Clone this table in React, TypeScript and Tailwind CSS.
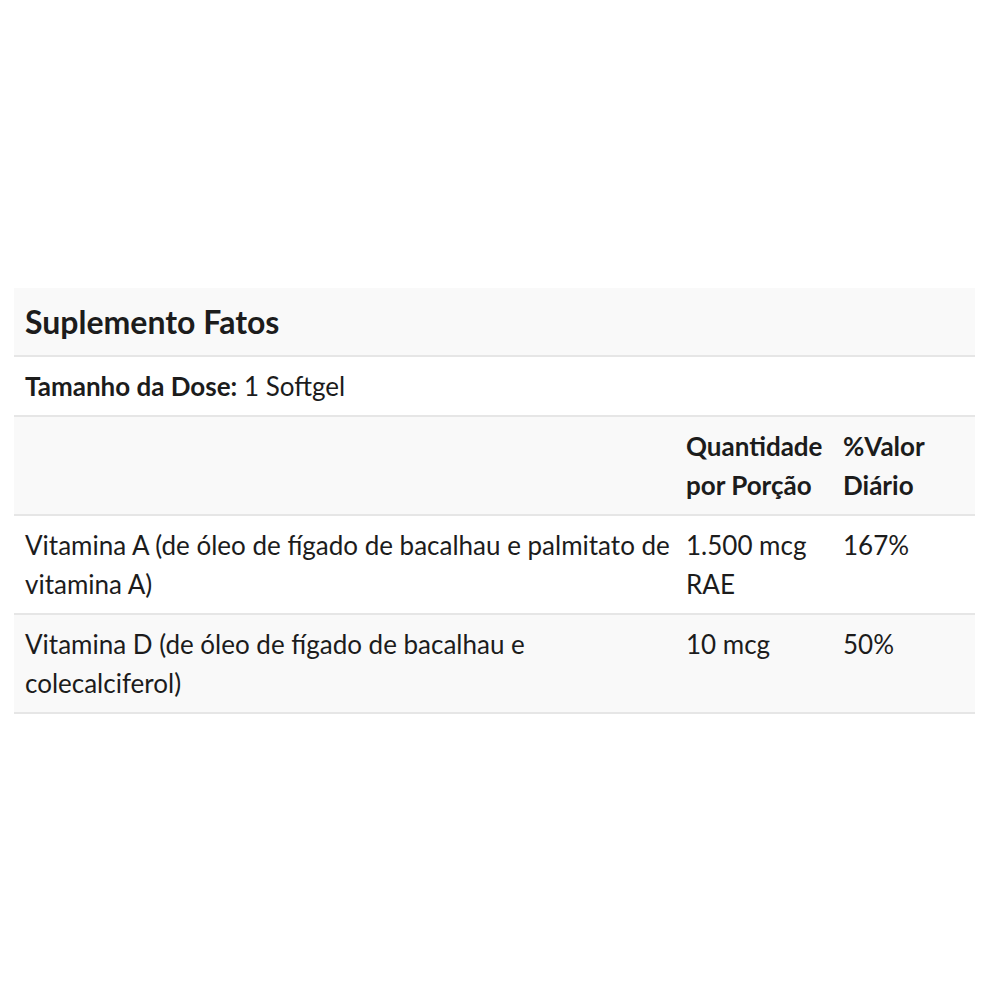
export default function App() {
  const font = { fontFamily: "Lato, 'Open Sans', sans-serif" };
  return (
    <div className="w-[1000px] h-[1000px] bg-white pt-[288px] pl-[14px]" style={font}>
      <div className="w-[961px] text-[#1c1c1c] text-[26px] leading-[39px]">
        <div className="bg-[#f9f9f9] h-[69px] flex items-center px-[11px] border-b-2 border-[#e6e6e6]">
          <span className="text-[32px] font-bold">Suplemento Fatos</span>
        </div>
        <div className="bg-white h-[60px] flex items-center px-[11px] border-b-2 border-[#e6e6e6]">
          <span><b>Tamanho da Dose:</b> 1 Softgel</span>
        </div>
        <div className="grid grid-cols-[661px_157px_143px] bg-[#f9f9f9] border-b-2 border-[#e6e6e6]">
          <div className="pt-[10px] pb-[9px] pl-[11px] pr-[4px]"></div>
          <div className="pt-[10px] pb-[9px] px-[11px] font-bold">Quantidade por Porção</div>
          <div className="pt-[10px] pb-[9px] px-[11px] font-bold">%Valor Diário</div>
        </div>
        <div className="grid grid-cols-[661px_157px_143px] bg-white border-b-2 border-[#e6e6e6]">
          <div className="pt-[10px] pb-[9px] pl-[11px] pr-[4px]">Vitamina A (de óleo de fígado de bacalhau e palmitato de vitamina A)</div>
          <div className="pt-[10px] pb-[9px] px-[11px]">1.500 mcg RAE</div>
          <div className="pt-[10px] pb-[9px] px-[11px]">167%</div>
        </div>
        <div className="grid grid-cols-[661px_157px_143px] bg-[#f9f9f9] border-b-2 border-[#e6e6e6]">
          <div className="pt-[10px] pb-[9px] pl-[11px] pr-[4px]">Vitamina D (de óleo de fígado de bacalhau e colecalciferol)</div>
          <div className="pt-[10px] pb-[9px] px-[11px]">10 mcg</div>
          <div className="pt-[10px] pb-[9px] px-[11px]">50%</div>
        </div>
      </div>
    </div>
  );
}
